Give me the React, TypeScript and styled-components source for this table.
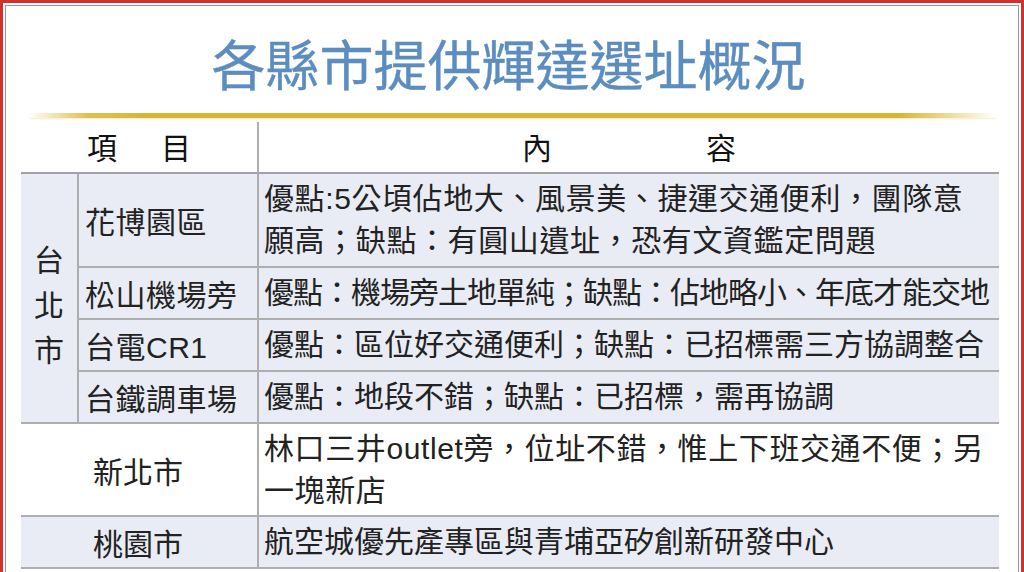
import React from "react";
import styled, { createGlobalStyle } from "styled-components";

const Global = createGlobalStyle`
  html, body {
    margin: 0;
    padding: 0;
    background: #ffffff;
  }
  body {
    font-family: "Liberation Sans", "Noto Sans CJK TC", sans-serif;
    color: #222222;
  }
`;

const Page = styled.div`
  width: 1024px;
  height: 572px;
  overflow: hidden;
  background: #ffffff;
`;

const Frame = styled.div`
  box-sizing: border-box;
  width: 1024px;
  height: 640px;
  border: 3px solid #d3302c;
  border-bottom: none;
  padding: 2px 2px 0 2px;
  background: #ffffff;
`;

const Inner = styled.div`
  box-sizing: border-box;
  height: 100%;
  border: 1px solid #8e99ad;
  border-bottom: none;
  padding: 0 16px 0 15px;
  display: flex;
  flex-direction: column;
`;

const Title = styled.h1`
  margin: 25px 0 0 0;
  font-family: "Noto Sans CJK TC", sans-serif;
  font-size: 54px;
  line-height: 64px;
  font-weight: 400;
  color: #5b8dc0;
  text-align: center;
  padding-right: 6px;
  -webkit-text-stroke: 0.4px #5b8dc0;
`;

const GoldRule = styled.div`
  margin: 18px 0 0 8px;
  width: 967px;
  height: 5px;
  border-radius: 3px;
  background: linear-gradient(
    to right,
    rgba(216, 182, 52, 0) 0%,
    rgba(216, 182, 52, 0.85) 6%,
    #d8b634 12%,
    #d8b634 90%,
    rgba(216, 182, 52, 0.5) 95%,
    rgba(216, 182, 52, 0) 100%
  );
  box-shadow: 0 1px 2px rgba(216, 182, 52, 0.25);
`;

const Table = styled.div`
  margin-top: 4px;
  width: 978px;
  display: grid;
  grid-template-columns: 58px 178px 1fr;
  grid-template-rows: 52px 94px 52px 52px 52px 93px 52px;
  font-size: 30px;
  font-weight: 400;
`;

const line = "#aeaeae";
const shade = "#e9ecf4";

const HeadCell = styled.div<{ $span?: number; $gap: number; $divider?: boolean }>`
  box-sizing: border-box;
  grid-column: span ${(p) => p.$span ?? 1};
  display: flex;
  align-items: center;
  justify-content: center;
  gap: ${(p) => p.$gap}px;
  border-bottom: 2px solid #a2a2a2;
  border-left: ${(p) => (p.$divider ? `2px solid ${line}` : "none")};
  font-family: "Noto Sans CJK TC", sans-serif;
  font-weight: 400;
  color: #111111;
  padding-bottom: 2px;
`;

const CityCell = styled.div`
  box-sizing: border-box;
  grid-row: span 4;
  background: ${shade};
  border-bottom: 2px solid ${line};
  border-right: 2px solid ${line};
  display: flex;
  flex-direction: column;
  align-items: center;
  justify-content: center;
  line-height: 45px;
  padding-top: 14px;
`;

const Cell = styled.div<{ $shaded?: boolean }>`
  box-sizing: border-box;
  background: ${(p) => (p.$shaded ? shade : "#ffffff")};
  border-bottom: 2px solid ${line};
  display: flex;
  align-items: center;
  white-space: nowrap;
`;

const SiteCell = styled(Cell)`
  padding-left: 6px;
  letter-spacing: 0.5px;
`;

const RegionCell = styled(Cell)`
  grid-column: span 2;
  justify-content: center;
  padding-right: 2px;
`;

const ContentCell = styled(Cell)<{ $spacing?: number }>`
  border-left: 2px solid ${line};
  padding-left: 5px;
  line-height: 42px;
  letter-spacing: ${(p) => p.$spacing ?? 0}px;
`;

const Text = styled.span`
  display: block;
`;

export default function App() {
  return (
    <Page>
      <Global />
      <Frame>
        <Inner>
          <Title>各縣市提供輝達選址概況</Title>
          <GoldRule />
          <Table>
            <HeadCell $span={2} $gap={44}>
              <span>項</span>
              <span>目</span>
            </HeadCell>
            <HeadCell $gap={154} $divider>
              <span>內</span>
              <span>容</span>
            </HeadCell>

            <CityCell>
              <span>台</span>
              <span>北</span>
              <span>市</span>
            </CityCell>
            <SiteCell $shaded>花博園區</SiteCell>
            <ContentCell $shaded $spacing={0.6}>
              <Text>
                優點:5公頃佔地大、風景美、捷運交通便利，團隊意
                <br />
                願高；缺點：有圓山遺址，恐有文資鑑定問題
              </Text>
            </ContentCell>

            <SiteCell $shaded>松山機場旁</SiteCell>
            <ContentCell $shaded $spacing={-1}>
              <Text>優點：機場旁土地單純；缺點：佔地略小、年底才能交地</Text>
            </ContentCell>

            <SiteCell $shaded>台電CR1</SiteCell>
            <ContentCell $shaded>
              <Text>優點：區位好交通便利；缺點：已招標需三方協調整合</Text>
            </ContentCell>

            <SiteCell $shaded>台鐵調車場</SiteCell>
            <ContentCell $shaded>
              <Text>優點：地段不錯；缺點：已招標，需再協調</Text>
            </ContentCell>

            <RegionCell>新北市</RegionCell>
            <ContentCell $spacing={0.6}>
              <Text>
                林口三井outlet旁，位址不錯，惟上下班交通不便；另
                <br />
                一塊新店
              </Text>
            </ContentCell>

            <RegionCell $shaded>桃園市</RegionCell>
            <ContentCell $shaded>
              <Text>航空城優先產專區與青埔亞矽創新研發中心</Text>
            </ContentCell>
          </Table>
        </Inner>
      </Frame>
    </Page>
  );
}
